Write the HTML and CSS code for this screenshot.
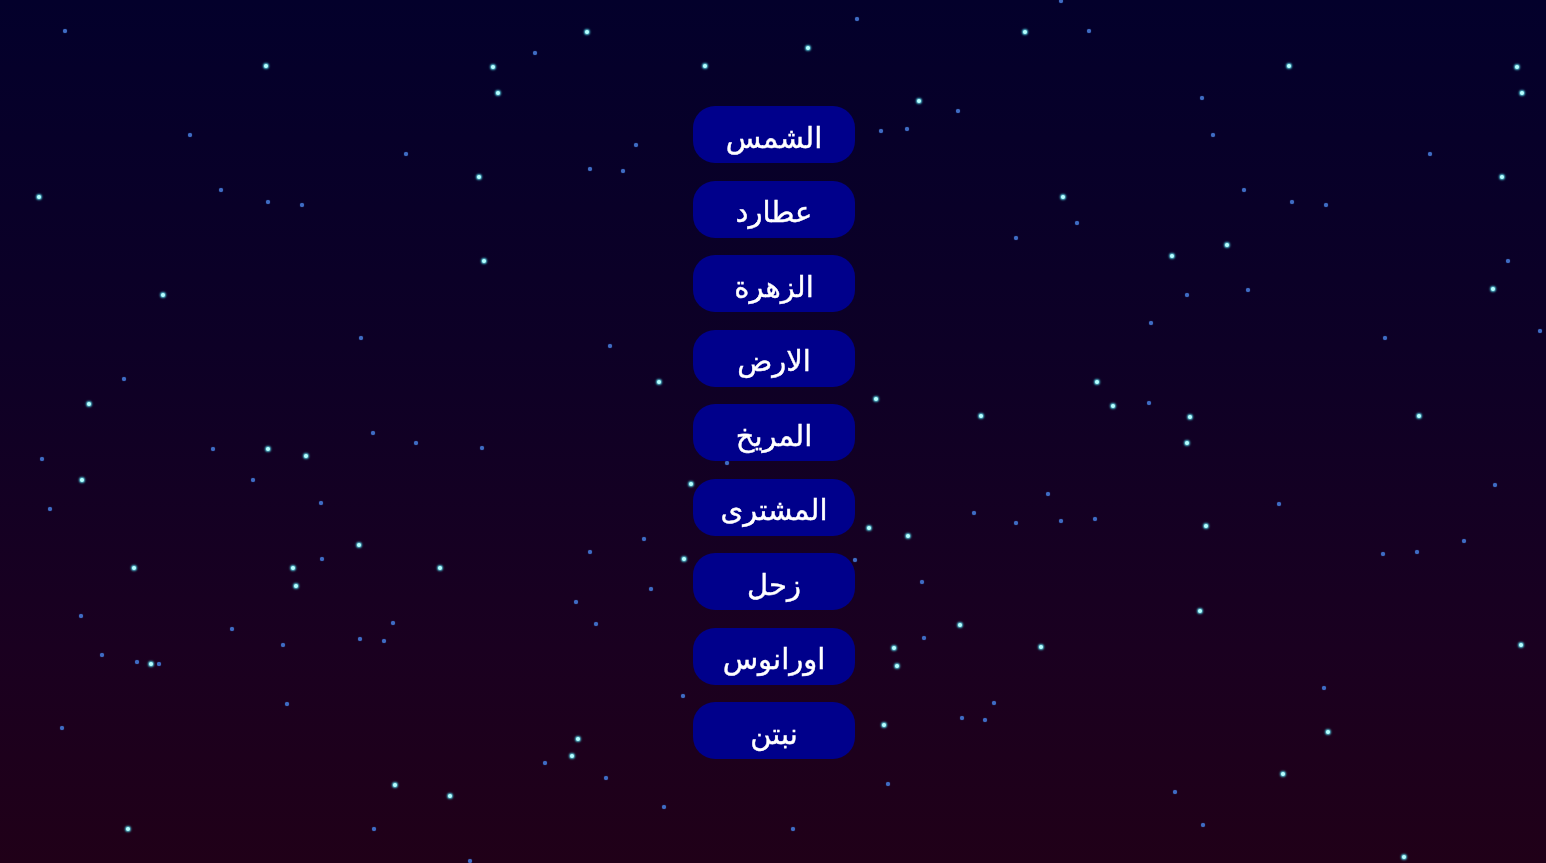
FILE: index.html
```html
<!DOCTYPE html>
<html lang="ar">
<head>
<meta charset="utf-8">
<title>الكواكب</title>
<link rel="stylesheet" href="styles.css">
</head>
<body>
<div class="sky">
<span class="star b" style="left:266px;top:66px"></span>
<span class="star" style="left:65px;top:31px"></span>
<span class="star" style="left:190px;top:135px"></span>
<span class="star b" style="left:39px;top:197px"></span>
<span class="star" style="left:221px;top:190px"></span>
<span class="star" style="left:268px;top:202px"></span>
<span class="star" style="left:302px;top:205px"></span>
<span class="star" style="left:406px;top:154px"></span>
<span class="star b" style="left:493px;top:67px"></span>
<span class="star b" style="left:498px;top:93px"></span>
<span class="star" style="left:535px;top:53px"></span>
<span class="star b" style="left:587px;top:32px"></span>
<span class="star b" style="left:479px;top:177px"></span>
<span class="star" style="left:590px;top:169px"></span>
<span class="star" style="left:623px;top:171px"></span>
<span class="star" style="left:636px;top:145px"></span>
<span class="star b" style="left:705px;top:66px"></span>
<span class="star b" style="left:808px;top:48px"></span>
<span class="star" style="left:857px;top:19px"></span>
<span class="star b" style="left:919px;top:101px"></span>
<span class="star" style="left:958px;top:111px"></span>
<span class="star" style="left:881px;top:131px"></span>
<span class="star" style="left:907px;top:129px"></span>
<span class="star b" style="left:1025px;top:32px"></span>
<span class="star" style="left:1089px;top:31px"></span>
<span class="star" style="left:1061px;top:1px"></span>
<span class="star b" style="left:1289px;top:66px"></span>
<span class="star" style="left:1202px;top:98px"></span>
<span class="star" style="left:1213px;top:135px"></span>
<span class="star" style="left:1430px;top:154px"></span>
<span class="star b" style="left:1517px;top:67px"></span>
<span class="star b" style="left:1522px;top:93px"></span>
<span class="star b" style="left:1502px;top:177px"></span>
<span class="star" style="left:1244px;top:190px"></span>
<span class="star" style="left:1292px;top:202px"></span>
<span class="star" style="left:1326px;top:205px"></span>
<span class="star b" style="left:1063px;top:197px"></span>
<span class="star" style="left:1077px;top:223px"></span>
<span class="star" style="left:1016px;top:238px"></span>
<span class="star b" style="left:1172px;top:256px"></span>
<span class="star b" style="left:1227px;top:245px"></span>
<span class="star" style="left:1187px;top:295px"></span>
<span class="star" style="left:1248px;top:290px"></span>
<span class="star" style="left:1508px;top:261px"></span>
<span class="star b" style="left:1493px;top:289px"></span>
<span class="star" style="left:1540px;top:331px"></span>
<span class="star" style="left:1151px;top:323px"></span>
<span class="star" style="left:1385px;top:338px"></span>
<span class="star b" style="left:1097px;top:382px"></span>
<span class="star b" style="left:1113px;top:406px"></span>
<span class="star" style="left:1149px;top:403px"></span>
<span class="star b" style="left:1190px;top:417px"></span>
<span class="star b" style="left:1187px;top:443px"></span>
<span class="star b" style="left:1419px;top:416px"></span>
<span class="star b" style="left:981px;top:416px"></span>
<span class="star b" style="left:876px;top:399px"></span>
<span class="star b" style="left:484px;top:261px"></span>
<span class="star b" style="left:163px;top:295px"></span>
<span class="star" style="left:361px;top:338px"></span>
<span class="star" style="left:610px;top:346px"></span>
<span class="star b" style="left:659px;top:382px"></span>
<span class="star" style="left:124px;top:379px"></span>
<span class="star b" style="left:89px;top:404px"></span>
<span class="star" style="left:213px;top:449px"></span>
<span class="star b" style="left:268px;top:449px"></span>
<span class="star b" style="left:306px;top:456px"></span>
<span class="star" style="left:373px;top:433px"></span>
<span class="star" style="left:416px;top:443px"></span>
<span class="star" style="left:482px;top:448px"></span>
<span class="star" style="left:42px;top:459px"></span>
<span class="star b" style="left:82px;top:480px"></span>
<span class="star" style="left:253px;top:480px"></span>
<span class="star" style="left:321px;top:503px"></span>
<span class="star" style="left:50px;top:509px"></span>
<span class="star b" style="left:359px;top:545px"></span>
<span class="star b" style="left:134px;top:568px"></span>
<span class="star b" style="left:293px;top:568px"></span>
<span class="star" style="left:322px;top:559px"></span>
<span class="star b" style="left:440px;top:568px"></span>
<span class="star b" style="left:296px;top:586px"></span>
<span class="star" style="left:590px;top:552px"></span>
<span class="star" style="left:644px;top:539px"></span>
<span class="star b" style="left:684px;top:559px"></span>
<span class="star b" style="left:691px;top:484px"></span>
<span class="star" style="left:727px;top:463px"></span>
<span class="star b" style="left:869px;top:528px"></span>
<span class="star b" style="left:908px;top:536px"></span>
<span class="star" style="left:855px;top:560px"></span>
<span class="star" style="left:922px;top:582px"></span>
<span class="star" style="left:974px;top:513px"></span>
<span class="star" style="left:1016px;top:523px"></span>
<span class="star" style="left:1048px;top:494px"></span>
<span class="star" style="left:1061px;top:521px"></span>
<span class="star" style="left:1095px;top:519px"></span>
<span class="star b" style="left:1206px;top:526px"></span>
<span class="star" style="left:1279px;top:504px"></span>
<span class="star" style="left:1495px;top:485px"></span>
<span class="star" style="left:1464px;top:541px"></span>
<span class="star" style="left:1417px;top:552px"></span>
<span class="star" style="left:1383px;top:554px"></span>
<span class="star" style="left:81px;top:616px"></span>
<span class="star" style="left:232px;top:629px"></span>
<span class="star" style="left:393px;top:623px"></span>
<span class="star" style="left:360px;top:639px"></span>
<span class="star" style="left:384px;top:641px"></span>
<span class="star" style="left:283px;top:645px"></span>
<span class="star" style="left:102px;top:655px"></span>
<span class="star" style="left:137px;top:662px"></span>
<span class="star b" style="left:151px;top:664px"></span>
<span class="star" style="left:159px;top:664px"></span>
<span class="star" style="left:576px;top:602px"></span>
<span class="star" style="left:596px;top:624px"></span>
<span class="star" style="left:651px;top:589px"></span>
<span class="star b" style="left:960px;top:625px"></span>
<span class="star" style="left:924px;top:638px"></span>
<span class="star b" style="left:894px;top:648px"></span>
<span class="star b" style="left:897px;top:666px"></span>
<span class="star b" style="left:1041px;top:647px"></span>
<span class="star b" style="left:1200px;top:611px"></span>
<span class="star b" style="left:1521px;top:645px"></span>
<span class="star" style="left:1324px;top:688px"></span>
<span class="star b" style="left:1328px;top:732px"></span>
<span class="star" style="left:287px;top:704px"></span>
<span class="star" style="left:62px;top:728px"></span>
<span class="star" style="left:683px;top:696px"></span>
<span class="star b" style="left:884px;top:725px"></span>
<span class="star" style="left:962px;top:718px"></span>
<span class="star" style="left:985px;top:720px"></span>
<span class="star" style="left:994px;top:703px"></span>
<span class="star b" style="left:578px;top:739px"></span>
<span class="star b" style="left:572px;top:756px"></span>
<span class="star" style="left:545px;top:763px"></span>
<span class="star" style="left:606px;top:778px"></span>
<span class="star b" style="left:395px;top:785px"></span>
<span class="star b" style="left:450px;top:796px"></span>
<span class="star" style="left:664px;top:807px"></span>
<span class="star" style="left:888px;top:784px"></span>
<span class="star" style="left:1175px;top:792px"></span>
<span class="star b" style="left:1283px;top:774px"></span>
<span class="star" style="left:1203px;top:825px"></span>
<span class="star b" style="left:128px;top:829px"></span>
<span class="star" style="left:374px;top:829px"></span>
<span class="star" style="left:793px;top:829px"></span>
<span class="star" style="left:470px;top:861px"></span>
<span class="star b" style="left:1404px;top:857px"></span>
</div>
<main class="menu">
  <button class="planet">الشمس</button>
  <button class="planet">عطارد</button>
  <button class="planet">الزهرة</button>
  <button class="planet">الارض</button>
  <button class="planet">المريخ</button>
  <button class="planet">المشترى</button>
  <button class="planet">زحل</button>
  <button class="planet">اورانوس</button>
  <button class="planet">نبتن</button>
</main>
</body>
</html>
```
FILE: styles.css
```css
html, body {
  margin: 0;
  padding: 0;
  height: 100%;
  overflow: hidden;
}
body {
  background: linear-gradient(to bottom, #03002b 0%, #0d0026 40%, #1a0020 75%, #200018 100%);
  font-family: "DejaVu Sans", "Noto Sans", sans-serif;
  direction: rtl;
}
.sky {
  position: fixed;
  inset: 0;
  pointer-events: none;
}
.star {
  position: absolute;
  width: 4px;
  height: 4px;
  margin: -2px 0 0 -2px;
  border-radius: 50%;
  background: #3f6cc4;
  box-shadow: 0 0 1px #3f6cc4;
}
.star.b {
  background: #b8ffff;
  box-shadow: 0 0 2px 1px #4fc4d8;
}
.menu {
  position: relative;
  height: 100%;
  display: flex;
  flex-direction: column;
  align-items: center;
  justify-content: center;
  gap: 17.5px;
  padding: 2px 0 0 2px;
  box-sizing: border-box;
}
.planet {
  width: 162px;
  height: 57px;
  border: none;
  border-radius: 22px;
  background: #00008b;
  color: #ffffff;
  font-family: "DejaVu Sans", "Noto Sans", sans-serif;
  font-size: 29px;
  line-height: 1;
  padding: 7px 0 0 0;
  cursor: pointer;
  display: flex;
  align-items: center;
  justify-content: center;
  -webkit-text-stroke: 0.4px #ffffff;
}
```
